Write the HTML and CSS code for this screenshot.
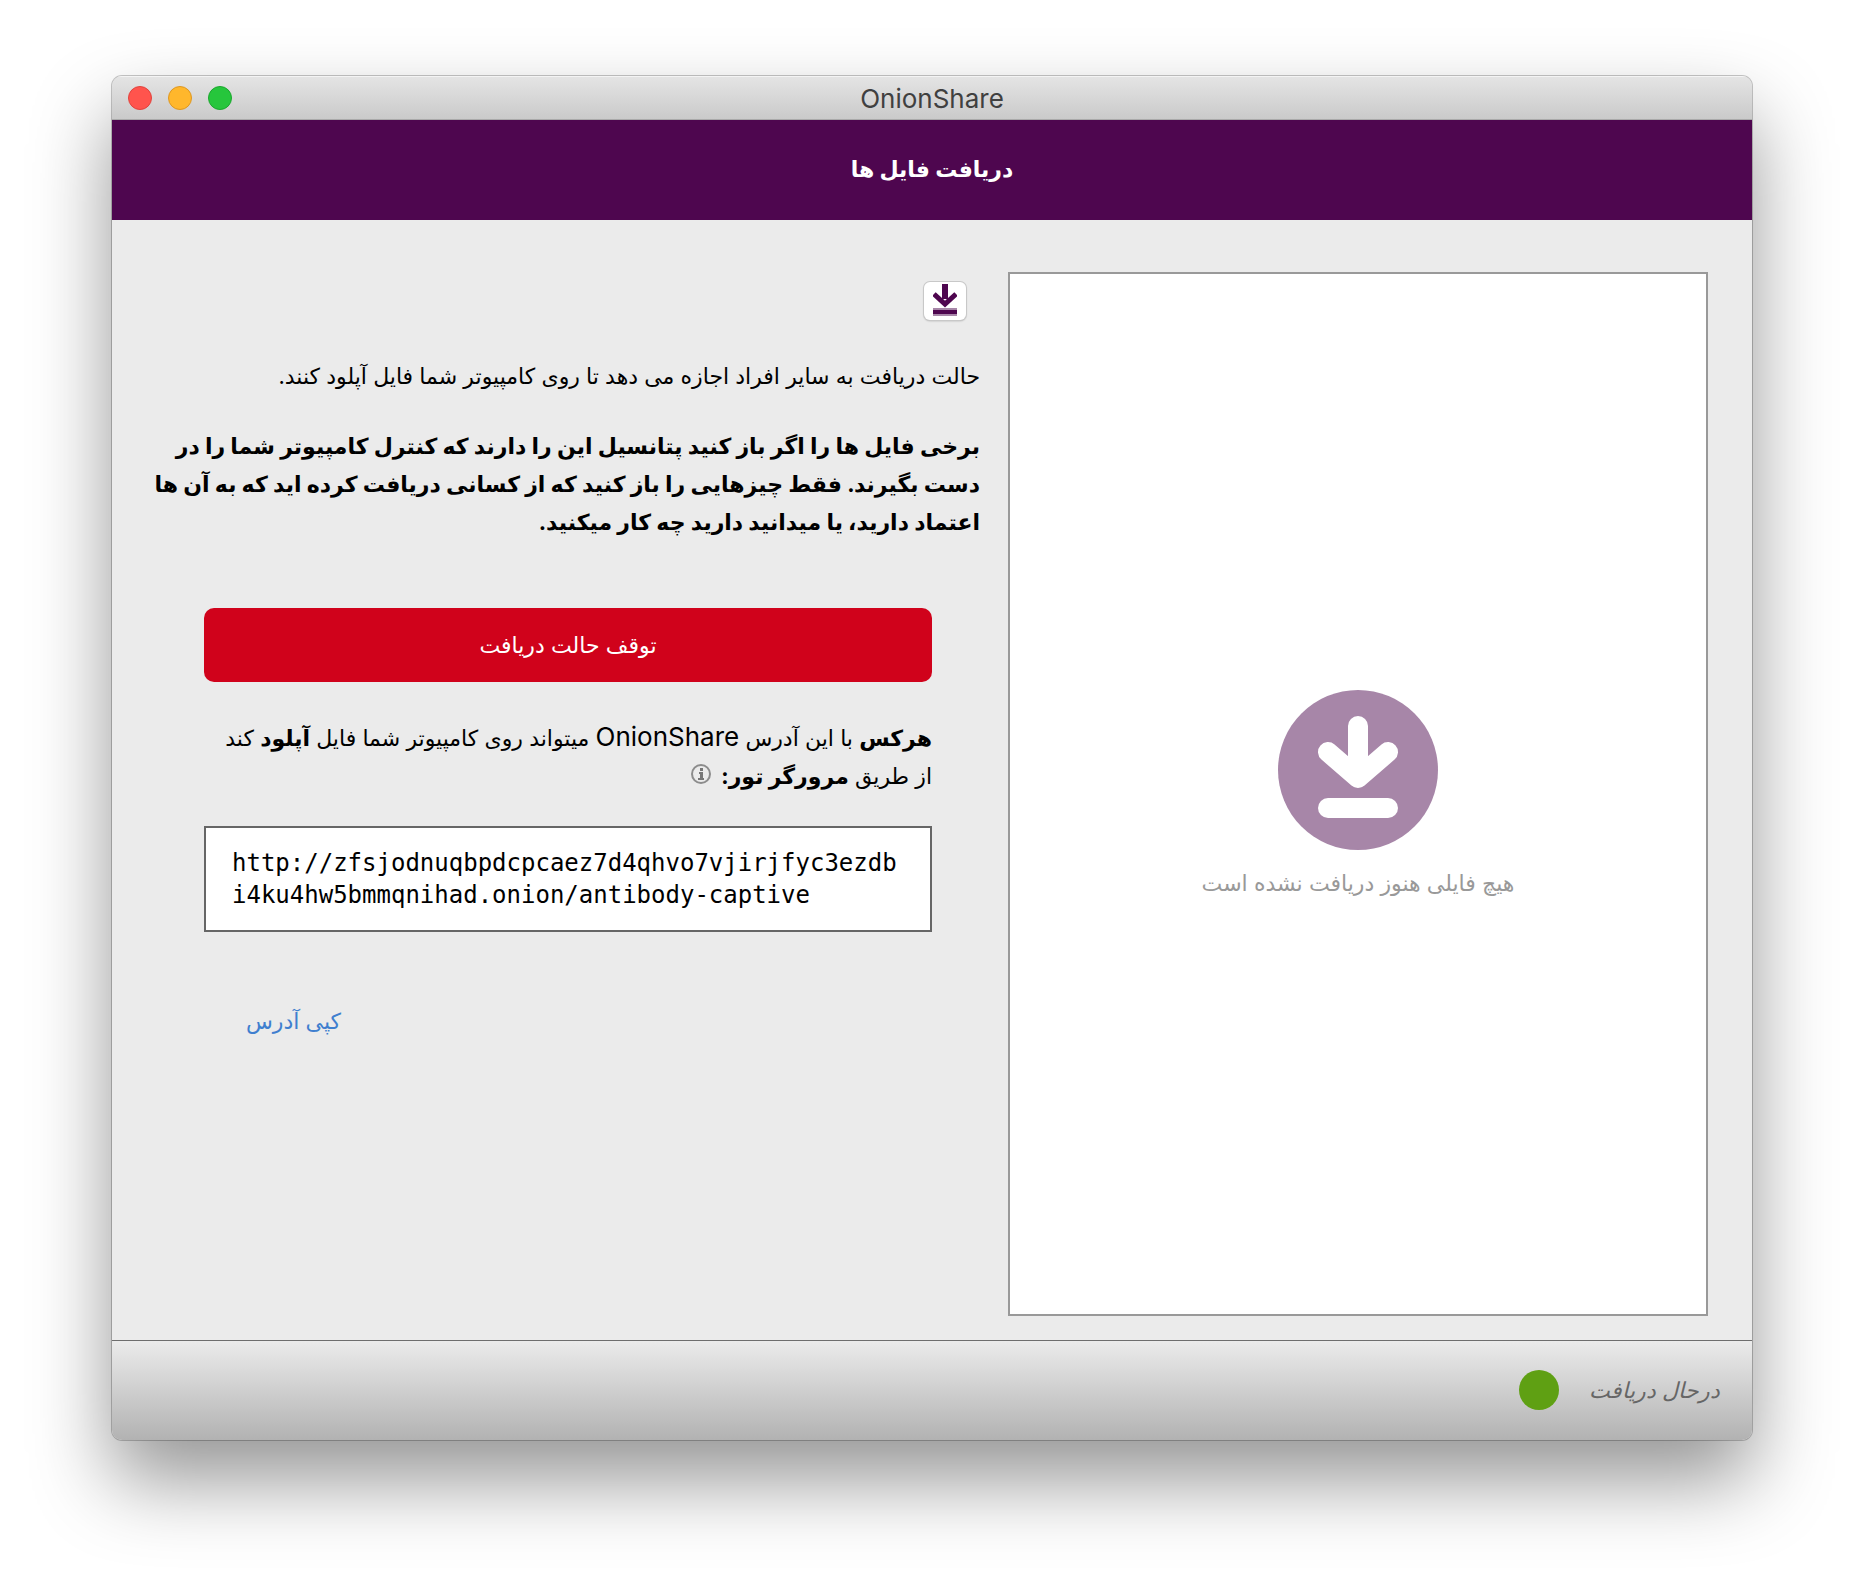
FILE: index.html
```html
<!DOCTYPE html>
<html lang="fa" dir="rtl">
<head>
<meta charset="utf-8">
<title>OnionShare</title>
<link rel="stylesheet" href="styles.css">
</head>
<body>
<div class="window">
  <header class="titlebar" dir="ltr">
    <div class="lights">
      <button class="light light-close" aria-label="Close"></button>
      <button class="light light-min" aria-label="Minimize"></button>
      <button class="light light-max" aria-label="Zoom"></button>
    </div>
    <span class="title">OnionShare</span>
  </header>
  <h1 class="mode">دریافت فایل ها</h1>
  <main class="content">
    <section class="history">
      <svg class="history-icon" viewBox="0 0 160 160" aria-hidden="true">
        <circle cx="80" cy="80" r="80" fill="#a786a8"/>
        <g fill="none" stroke="#fff" stroke-width="20" stroke-linecap="round" stroke-linejoin="round">
          <path d="M80 36v52M50 62l30 26 30-26"/>
          <path d="M50 118h60"/>
        </g>
      </svg>
      <p class="history-text">هیچ فایلی هنوز دریافت نشده است</p>
    </section>
    <section class="receive">
      <button class="toggle" aria-label="تاریخچه">
        <svg viewBox="0 0 24 32" aria-hidden="true">
          <path d="M9 0h6v15h-6z" fill="#4e064f"/>
          <path d="M1 10l11 10 11-10" fill="none" stroke="#4e064f" stroke-width="5"/>
          <path d="M0 24h24v8H0z" fill="#a786a8"/>
          <path d="M0 26h24v4H0z" fill="#4e064f"/>
        </svg>
      </button>
      <p class="intro">حالت دریافت به سایر افراد اجازه می دهد تا روی کامپیوتر شما فایل آپلود کنند.</p>
      <p class="warning">برخی فایل ها را اگر باز کنید پتانسیل این را دارند که کنترل کامپیوتر شما را در<br>دست بگیرند. فقط چیزهایی را باز کنید که از کسانی دریافت کرده اید که به آن ها<br>اعتماد دارید، یا میدانید دارید چه کار میکنید.</p>
      <div class="server">
        <button class="stop">توقف حالت دریافت</button>
        <p class="hint"><b>هرکس</b> با این آدرس <span class="latin">OnionShare</span> میتواند روی کامپیوتر شما فایل <b>آپلود</b> کند<br>از طریق <b>مرورگر تور:</b>
          <svg class="info" viewBox="0 0 20 20" aria-hidden="true">
            <circle cx="10" cy="10" r="9" fill="none" stroke="#8c8c8c" stroke-width="2"/>
            <path d="M9 4h3v3H9zM8 8h4v6h1v2H7v-2h2v-4H8z" fill="#777"/>
          </svg></p>
        <p class="url" dir="ltr">http://zfsjodnuqbpdcpcaez7d4qhvo7vjirjfyc3ezdbi4ku4hw5bmmqnihad.onion/antibody-captive</p>
        <button class="copy">کپی آدرس</button>
      </div>
    </section>
  </main>
  <footer class="status">
    <span class="status-text">درحال دریافت</span>
    <span class="dot"></span>
  </footer>
</div>
</body>
</html>
```
FILE: styles.css
```css
* { box-sizing: border-box; }

body {
  margin: 0;
  min-height: 100vh;
  padding: 76px 112px 148px;
  display: flex;
  background: #fff;
  color: #000;
  font: 22px/38px Inter, "DejaVu Sans", sans-serif;
}

p, h1 { margin: 0; }

button {
  padding: 0;
  border: 0;
  background: none;
  font: inherit;
}

.window {
  flex: 1;
  min-width: 0;
  display: flex;
  flex-direction: column;
  overflow: hidden;
  border-radius: 10px;
  background: #ebebeb;
  box-shadow: 0 0 0 1px rgba(0, 0, 0, .22), 0 40px 80px rgba(0, 0, 0, .42);
}

.titlebar {
  height: 44px;
  display: grid;
  grid-template-columns: 1fr auto 1fr;
  align-items: center;
  padding: 0 16px;
  border-top: 1px solid #f4f4f4;
  border-bottom: 1px solid #a9a9a9;
  background: linear-gradient(#e4e4e4, #cacaca);
}

.lights { display: flex; gap: 16px; }

.light {
  width: 24px;
  height: 24px;
  border: 1px solid;
  border-radius: 50%;
}

.light-close { background: #ff544d; border-color: #e0443e; }
.light-min { background: #ffb72c; border-color: #dd9722; }
.light-max { background: #26c63c; border-color: #1ba72e; }

.title { padding-top: 2px; font-size: 26px; color: #404040; }

.mode {
  height: 100px;
  line-height: 98px;
  background: #4e064f;
  color: #fff;
  font-size: 22px;
  text-align: center;
}

.content {
  flex: 1;
  display: grid;
  grid-template-columns: 5fr 6fr;
  gap: 28px;
  padding: 52px 44px 24px 28px;
}

.history {
  display: flex;
  flex-direction: column;
  align-items: center;
  justify-content: center;
  gap: 14px;
  padding-top: 4px;
  border: 2px solid #999;
  background: #fff;
}

.history-icon { width: 160px; height: 160px; }

.history-text { color: #999; }

.receive { padding-top: 10px; }

.toggle {
  display: flex;
  justify-content: center;
  align-items: flex-start;
  width: 42px;
  height: 38px;
  margin-right: 14px;
  padding-top: 2px;
  border-radius: 6px;
  background: #fff;
  box-shadow: 0 0 0 1px #c8c8c8, 0 1px 2px rgba(0, 0, 0, .3);
}

.toggle svg { width: 24px; height: 32px; }

.intro { margin-top: 37px; }

.warning { margin-top: 32px; font-weight: bold; white-space: nowrap; }

.server {
  display: flex;
  flex-direction: column;
  margin: 67px 48px 0 64px;
}

.stop {
  height: 74px;
  border-radius: 10px;
  background: #d0021b;
  color: #fff;
}

.hint { margin-top: 37px; white-space: nowrap; }

.latin { font-size: 26px; line-height: 32px; }

.info { width: 20px; height: 20px; margin-right: 4px; }

.url {
  margin-top: 31px;
  padding: 19px 26px;
  border: 2px solid #666;
  background: #fff;
  font: 24px/32px "DejaVu Sans Mono", monospace;
  word-break: break-all;
}

.copy {
  align-self: flex-end;
  margin: 70px 0 0 42px;
  color: #3f7fcf;
}

.status {
  height: 100px;
  display: flex;
  align-items: center;
  gap: 30px;
  padding: 0 32px 2px;
  border-top: 1px solid #6e6e6e;
  background: linear-gradient(#ebebeb, #b2b2b2);
}

.status-text { color: #666; font-style: italic; }

.dot {
  width: 40px;
  height: 40px;
  border-radius: 50%;
  background: #5fa013;
}
```
